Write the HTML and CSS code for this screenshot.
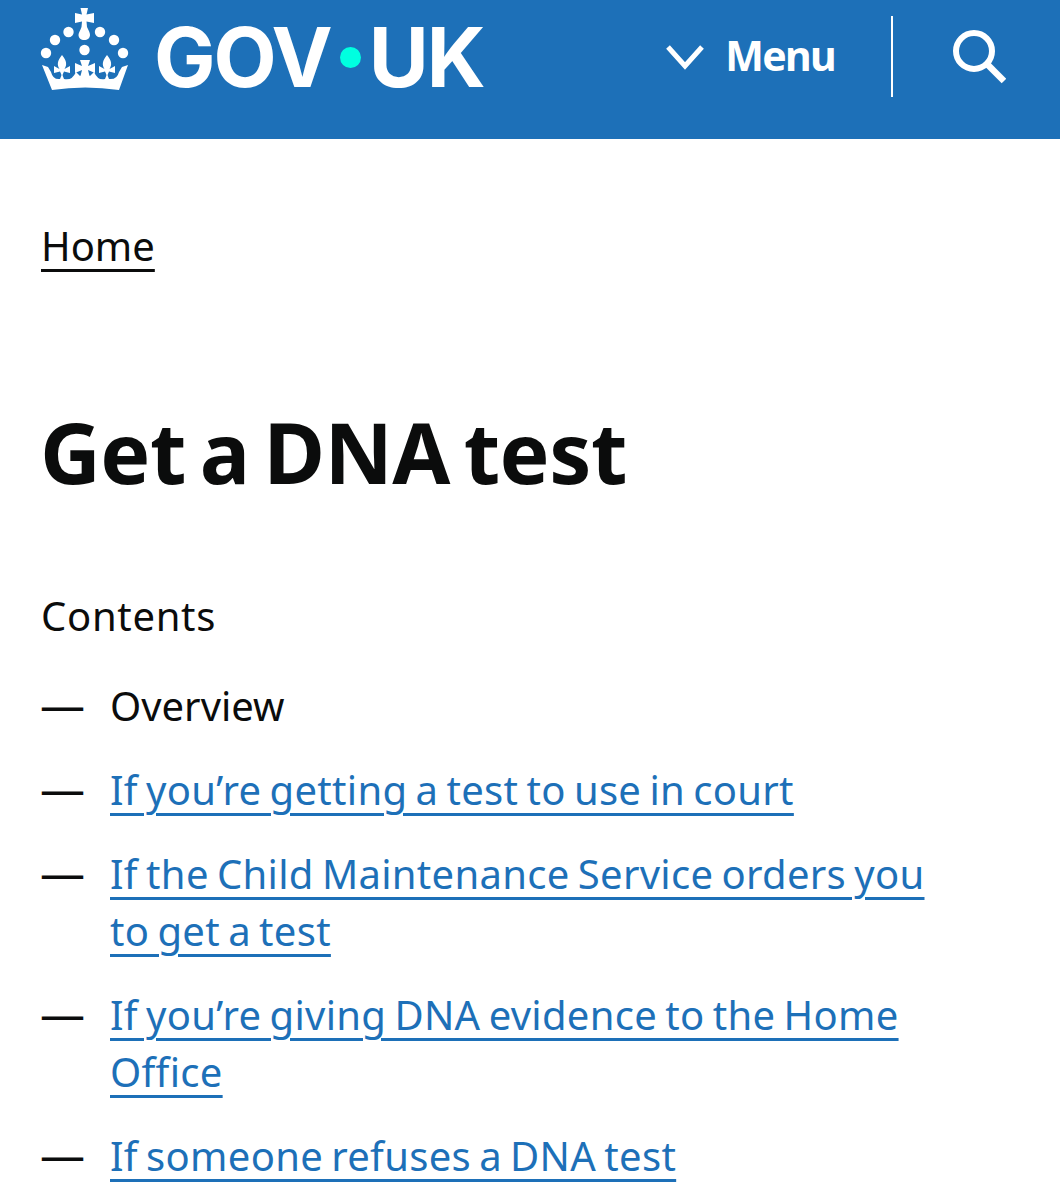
FILE: index.html
```html
<!DOCTYPE html>
<html lang="en">
<head>
<meta charset="utf-8">
<title>Get a DNA test - GOV.UK</title>
<link rel="stylesheet" href="styles.css">
</head>
<body>
<header class="site-header">
  <a class="logo" href="#">
    <svg class="crown" viewBox="30 0 110 100" width="110" height="100" aria-hidden="true">
      <g fill="#fff">
        <path d="M80.500 8H88L86.500 14.500 94 13V23L86.500 21.500 87 27C89 31 90 33 90 35 90 38 87.500 40 84.300 40 81 40 78.500 38 78.500 35 78.500 33 80 31 81.500 27L82 21.500 75 23V13L82 14.500Z"/>
        <circle cx="68.500" cy="32" r="5.200"/><circle cx="100" cy="32" r="5.200"/>
        <circle cx="55" cy="40" r="5.200"/><circle cx="114" cy="40" r="5.200"/>
        <circle cx="46" cy="53" r="5.200"/><circle cx="123" cy="53" r="5.200"/>
        <circle cx="84.500" cy="50" r="5.200"/>
        <path d="M42 65L48 67 51 72Q53 80 60 79L62 74 64 79Q72 81 76 72L80 76 85 74 90 76 94 72Q98 81 105 79L107 74 109 79Q117 80 119 72L122 67 128 65 119 90Q85 85 52 90Z"/>
        <path d="M62 55C67 61 67 65 64.500 69L70 66V73L64 71.500 62 76 60 71.500 54 73V66L59.500 69C57 65 57 61 62 55Z"/>
        <path d="M107 55C112 61 112 65 109.500 69L115 66V73L109 71.500 107 76 105 71.500 99 73V66L104.500 69C102 65 102 61 107 55Z"/>
        <path d="M75 63L82 66 80 60H90L88 66 95 63V73L88 70 90 78H80L82 70 75 73Z"/>
      </g>
    </svg>
    <span class="wordmark">GOV<span class="dot"></span>UK</span>
  </a>
  <div class="header-actions">
    <a class="menu" href="#">
      <svg class="chevron" viewBox="0 0 38 26" width="38" height="26" aria-hidden="true"><path d="M2 3l17 19L36 3" fill="none" stroke="#fff" stroke-width="5"/></svg>
      <span>Menu</span>
    </a>
    <span class="divider"></span>
    <a class="search" href="#" aria-label="Search">
      <svg viewBox="0 0 54 54" width="54" height="54" aria-hidden="true"><circle cx="22" cy="21" r="18" fill="none" stroke="#fff" stroke-width="6"/><path d="M35 34l17 17" fill="none" stroke="#fff" stroke-width="6.500"/></svg>
    </a>
  </div>
</header>
<main class="page">
  <nav class="breadcrumb"><a href="#">Home</a></nav>
  <h1>Get a DNA test</h1>
  <p class="contents-title">Contents</p>
  <ol class="contents">
    <li><span class="dash">—</span><span class="entry current">Overview</span></li>
    <li><span class="dash">—</span><a class="entry" href="#">If you’re getting a test to use in court</a></li>
    <li><span class="dash">—</span><a class="entry" href="#">If the Child Maintenance Service orders you<br>to get a test</a></li>
    <li><span class="dash">—</span><a class="entry" href="#">If you’re giving DNA evidence to the Home<br>Office</a></li>
    <li><span class="dash">—</span><a class="entry" href="#">If someone refuses a DNA test</a></li>
  </ol>
</main>
</body>
</html>
```
FILE: styles.css
```css
* { box-sizing: border-box; }
html, body { margin: 0; height: 1200px; overflow: hidden; }
body { background: #fff; color: #0b0c0c; font-family: "Noto Sans", "Open Sans", sans-serif; }
a { color: inherit; }

.site-header {
  height: 139px;
  background: #1d70b8;
  display: flex;
  justify-content: space-between;
  padding: 0 54px 0 30px;
}
.logo { display: flex; align-items: flex-start; gap: 14px; color: #fff; text-decoration: none; }
.crown { display: block; }
.wordmark {
  font-family: Inter, "Liberation Sans", sans-serif;
  font-weight: 700;
  font-size: 82px;
  line-height: 100px;
  margin-top: 8px;
  letter-spacing: -2px;
  display: flex;
  align-items: center;
}
.dot { width: 21px; height: 21px; border-radius: 50%; background: #00ffe0; margin: 0 8px 0 9px; transform: translateY(-1px); }
.header-actions { display: flex; align-items: flex-start; }
.menu {
  display: flex;
  align-items: center;
  gap: 21px;
  height: 96px;
  padding-top: 14px;
  color: #fff;
  text-decoration: none;
  font-weight: 700;
  font-size: 41px;
  letter-spacing: -1.700px;
}
.chevron { margin-top: 4px; }
.divider { width: 2px; height: 81px; margin: 16px 59px 0 56px; background: #fff; }
.search { margin-top: 30px; display: block; height: 54px; }

.page { padding: 0 42px; }
.breadcrumb { margin: 78px 0 0 -1px; font-size: 40px; line-height: 57px; }
.breadcrumb a { text-decoration: underline; text-decoration-thickness: 3px; text-underline-offset: 8px; }
h1 { margin: 128px 0 0 -2px; font-size: 84px; line-height: 100px; font-weight: 700; letter-spacing: -.5px; word-spacing: -7.500px; }
.contents-title { margin: 85px 0 0 -1px; font-size: 40px; line-height: 57px; letter-spacing: .7px; }
.contents { list-style: none; margin: 33px 0 0; padding: 0; font-size: 40px; line-height: 57px; letter-spacing: .3px; word-spacing: -2.500px; }
.contents li { display: flex; margin-bottom: 27px; }
.dash { width: 70px; margin-left: -2px; flex: none; font-size: 45px; line-height: 54px; letter-spacing: 0; }
.current { letter-spacing: 0; }
.contents a { color: #1d70b8; text-decoration: underline; text-decoration-thickness: 3px; text-underline-offset: 8px; }
```
